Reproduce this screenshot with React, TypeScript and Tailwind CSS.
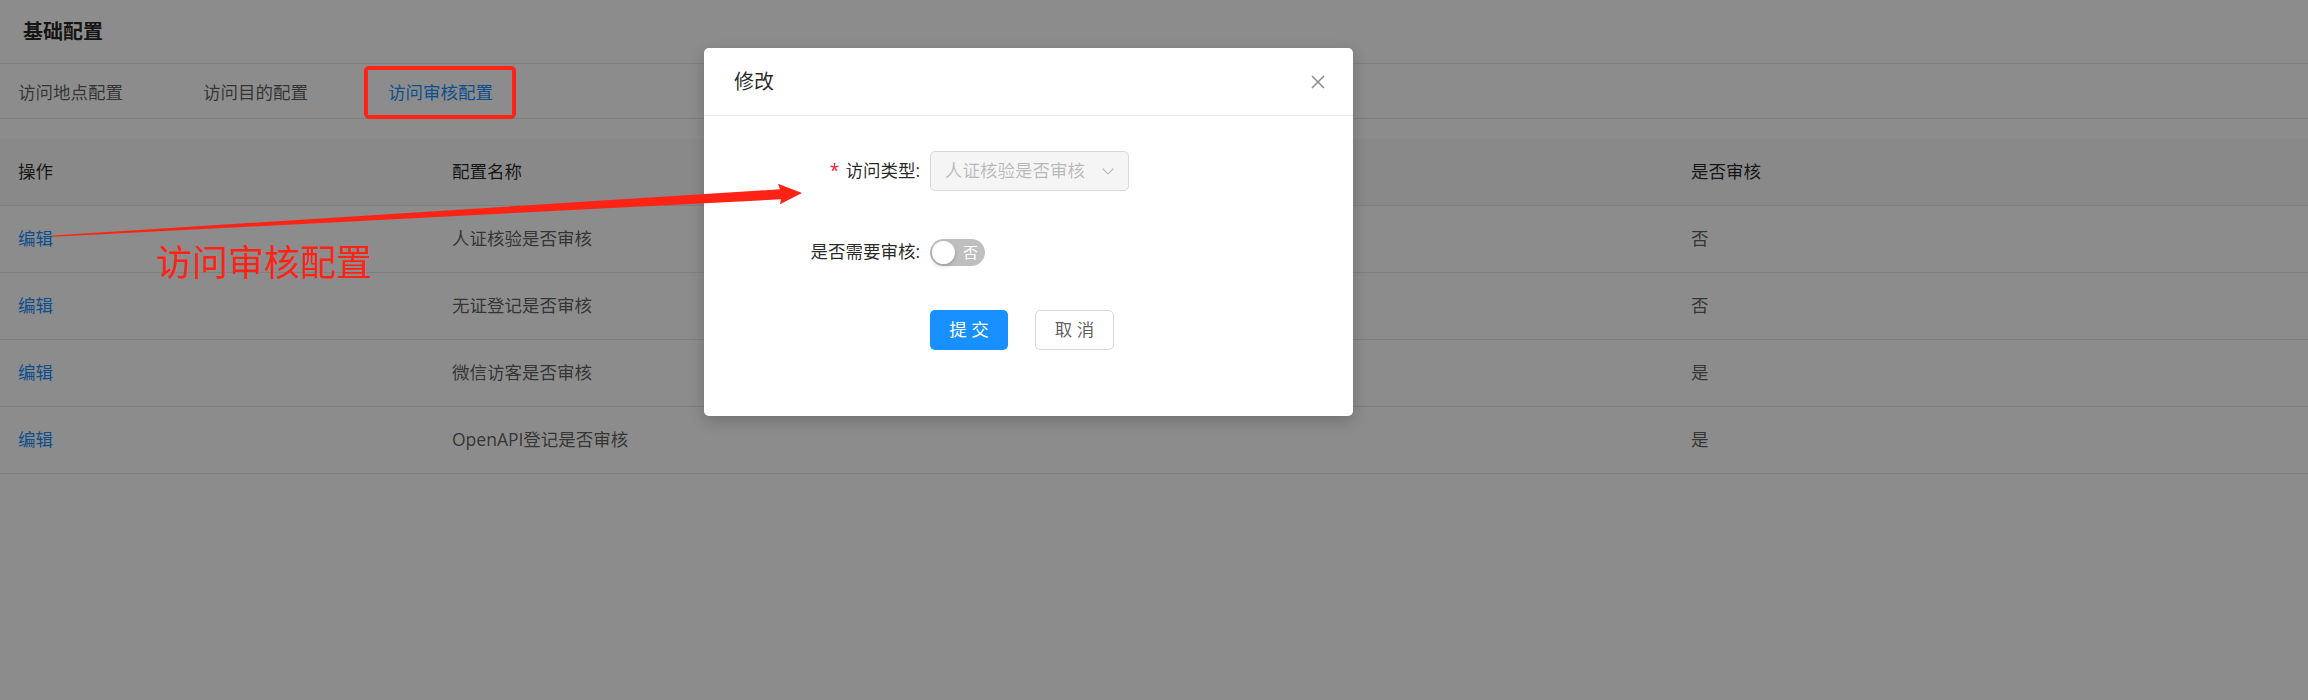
import React from 'react'

// 访问审核配置 - 修改弹窗 (页面整体按 125% 缩放量取值)
const tabs = ['访问地点配置', '访问目的配置', '访问审核配置']

const rows = [
  { name: '人证核验是否审核', audit: '否' },
  { name: '无证登记是否审核', audit: '否' },
  { name: '微信访客是否审核', audit: '是' },
  { name: 'OpenAPI登记是否审核', audit: '是' },
]

const font = "font-['Open_Sans','Noto_Sans_CJK_SC',sans-serif]"

const Page = () => (
  <div className="w-full">
    <div className="flex h-[64px] items-center border-b border-[#e8e8e8] pl-[23px]">
      <span className="text-[20px] font-bold leading-none text-black/85">基础配置</span>
    </div>
    <div className="flex h-[55px] items-center gap-[80px] border-b border-[#e8e8e8] pl-[18px] pt-[3px]">
      {tabs.map((t, i) => (
        <span key={t} className={'text-[17.5px] leading-none ' + (i === 2 ? 'text-[#1890ff]' : 'text-black/65')}>
          {t}
        </span>
      ))}
    </div>
    <div className="mt-[20px]">
      <div className="grid h-[67px] grid-cols-[434px_1239px_1fr] items-center border-b border-[#e8e8e8] bg-[#fafafa] text-[17.5px] leading-none text-black/85">
        <span className="pl-[18px]">操作</span>
        <span className="pl-[18px]">配置名称</span>
        <span className="pl-[18px]">是否审核</span>
      </div>
      {rows.map(r => (
        <div key={r.name} className="grid h-[67px] grid-cols-[434px_1239px_1fr] items-center border-b border-[#e8e8e8] text-[17.5px] leading-none text-black/65">
          <span className="pl-[18px] text-[#1890ff]">编辑</span>
          <span className="pl-[18px]">{r.name}</span>
          <span className="pl-[18px]">{r.audit}</span>
        </div>
      ))}
    </div>
  </div>
)

const EditModal = () => (
  <div className="absolute left-[704px] top-[48px] w-[649px] rounded-[5px] bg-white shadow-[0_5px_15px_rgba(0,0,0,0.2)]">
    <div className="flex h-[68px] items-center justify-between border-b border-[#e8e8e8] px-[30px]">
      <span className="text-[20px] leading-none text-black/85">修改</span>
      <svg width="14" height="14" viewBox="0 0 14 14" className="mr-[-2px]">
        <path d="M1 1L13 13M13 1L1 13" stroke="#8c8c8c" strokeWidth="1.5" />
      </svg>
    </div>
    <div className="flex flex-col pb-[66px] pt-[35px] text-[17.5px] leading-none">
      <div className="flex h-[40px] items-center">
        <div className="flex w-[226px] justify-end pr-[10px] text-black/85">
          <span className="mr-[6px] text-[#f5222d]">*</span>
          访问类型:
        </div>
        <div className="flex h-[40px] w-[199px] items-center justify-between rounded-[5px] border border-[#d9d9d9] bg-[#f5f5f5] pl-[14px] pr-[14px] text-black/25">
          <span>人证核验是否审核</span>
          <svg width="12" height="7" viewBox="0 0 12 7">
            <path d="M0.5 0.5L6 6L11.5 0.5" fill="none" stroke="#bfbfbf" strokeWidth="1.2" />
          </svg>
        </div>
      </div>
      <div className="mt-[41px] flex h-[40px] items-center">
        <div className="w-[226px] pr-[10px] text-right text-black/85">是否需要审核:</div>
        <div className="flex h-[27px] w-[55px] items-center rounded-full bg-[#bfbfbf] p-[2px]">
          <div className="h-[23px] w-[23px] rounded-full bg-white shadow-[0_2px_4px_rgba(0,35,11,0.2)]" />
          <span className="ml-[8px] text-[15px] text-white">否</span>
        </div>
      </div>
      <div className="mt-[38px] flex h-[40px] items-center gap-[27px] pl-[226px]">
        <button className="h-[40px] w-[78px] rounded-[5px] bg-[#1890ff] text-white">提 交</button>
        <button className="h-[40px] w-[79px] rounded-[5px] border border-[#d9d9d9] bg-white text-black/65">取 消</button>
      </div>
    </div>
  </div>
)

// 截图上的红色标注: 框 + 箭头 + 文字
const Annotation = () => (
  <>
    <div className="absolute left-[364px] top-[66px] h-[53px] w-[152px] rounded-[5px] border-[4px] border-[#ff2315]" />
    <svg className="absolute left-0 top-0" width="900" height="300" viewBox="0 0 900 300">
      <polygon points="53,235.4 780,189.3 778,183.8 802,193 780,204.3 781,199.3 53,236.8" fill="#ff2315" />
    </svg>
    <span className="absolute left-[156px] top-[245px] text-[36px] leading-none text-[#ff2315]">访问审核配置</span>
  </>
)

const App = () => {
  return (
    <div className={'relative h-[700px] w-full overflow-hidden bg-white ' + font}>
      <Page />
      <div className="absolute inset-0 bg-black/45" />
      <EditModal />
      <Annotation />
    </div>
  )
}

export default App
